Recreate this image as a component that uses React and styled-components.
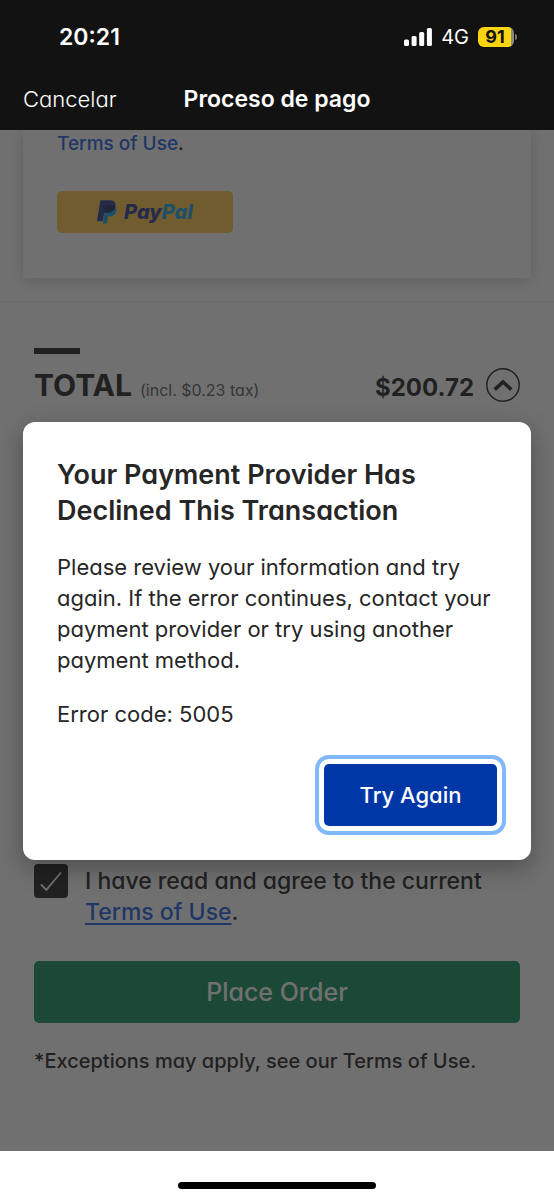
import React, { useState } from "react";
import styled, { createGlobalStyle } from "styled-components";

const GlobalStyle = createGlobalStyle`
  *, *::before, *::after { box-sizing: border-box; }
  body {
    margin: 0;
    background: #fff;
    color: #262626;
    font-family: Inter, "Liberation Sans", sans-serif;
    font-feature-settings: "cv11";
  }
  h1, h2, p { margin: 0; }
  button { font: inherit; font-feature-settings: inherit; border: 0; padding: 0; cursor: pointer; }
`;

const Screen = styled.div`
  display: flex;
  flex-direction: column;
  min-height: 100vh;
`;

const Header = styled.header`
  background: #121212;
  color: #fff;
  padding: 22px 23px 16px;
`;

const StatusBar = styled.div`
  display: flex;
  align-items: center;
  justify-content: space-between;
  height: 30px;
  padding: 0 14px 0 36px;
`;

const Clock = styled.time`
  font-size: 23px;
  font-weight: 600;
  font-feature-settings: normal;
`;

const Indicators = styled.div`
  display: flex;
  align-items: center;
  gap: 9px;
  font-size: 20px;
`;

const Battery = styled.span`
  display: flex;
  align-items: center;
  gap: 1px;
`;

const BatteryLevel = styled.span`
  width: 36px;
  height: 20px;
  border-radius: 6px;
  background: linear-gradient(to right, #fbd50f 91%, #8c8a80 91%);
  color: #121212;
  font-size: 18px;
  font-weight: 700;
  line-height: 20px;
  text-align: center;
  padding-right: 2px;
`;

const BatteryTip = styled.span`
  width: 2px;
  height: 6px;
  border-radius: 0 2px 2px 0;
  background: #77756f;
`;

const NavBar = styled.nav`
  display: grid;
  grid-template-columns: 1fr auto 1fr;
  align-items: center;
  height: 30px;
  margin-top: 32px;
`;

const CancelButton = styled.button`
  justify-self: start;
  background: none;
  color: #fff;
  font-size: 22px;
  font-weight: 300;
`;

const NavTitle = styled.h1`
  font-size: 23px;
  font-weight: 600;
  font-feature-settings: normal;
`;

const Stage = styled.div`
  flex: 1;
  display: grid;

  & > * { grid-area: 1 / 1; }
`;

const Checkout = styled.main`
  display: flex;
  flex-direction: column;
  min-width: 0;
`;

const PaymentCard = styled.section`
  margin: 0 23px 23px;
  padding: 0 34px 45px;
  background: #fff;
  box-shadow: 0 2px 14px rgba(0, 0, 0, 0.2);
  clip-path: inset(0 -20px -20px -20px);
`;

const CardTerms = styled.p`
  font-size: 19px;
  font-weight: 500;
  line-height: 28px;
`;

const Link = styled.a`
  color: #1e62e0;
  text-decoration: ${(p) => (p.$underlined ? "underline" : "none")};
  text-decoration-thickness: 2px;
  text-underline-offset: 3px;
`;

const PayPalButton = styled.button`
  display: flex;
  align-items: center;
  justify-content: center;
  gap: 7px;
  width: 176px;
  height: 42px;
  margin-top: 33px;
  border-radius: 5px;
  background: #ffc84c;
`;

const PayPalWord = styled.span`
  font-size: 20px;
  font-weight: 800;
  font-style: italic;
  color: #2b3f96;

  em { color: #1fa5e6; }
`;

const Summary = styled.section`
  padding: 46px 34px 0;
  border-top: 1px solid #efefef;
`;

const Accent = styled.div`
  width: 46px;
  height: 6px;
  background: #262626;
`;

const TotalRow = styled.div`
  display: flex;
  align-items: center;
  gap: 12px;
  height: 36px;
  margin-top: 13px;
`;

const TotalFigures = styled.div`
  flex: 1;
  display: flex;
  align-items: baseline;
  gap: 8px;
`;

const TotalLabel = styled.h2`
  font-size: 30px;
  font-weight: 700;
  line-height: 36px;
`;

const TaxNote = styled.small`
  font-size: 16px;
  color: #606060;
`;

const Amount = styled.strong`
  margin-left: auto;
  font-size: 24px;
  font-weight: 700;
`;

const ToggleButton = styled.button`
  display: grid;
  background: none;
`;

const OrderForm = styled.form`
  margin-top: auto;
  padding: 0 34px 76px;
`;

const Agreement = styled.div`
  display: flex;
  align-items: flex-start;
  gap: 17px;
`;

const AgreementLabel = styled.label`
  padding-top: 2px;
  font-size: 23px;
  font-weight: 500;
  line-height: 31px;
`;

const Checkbox = styled.input`
  appearance: none;
  flex: none;
  width: 34px;
  height: 34px;
  margin: 0;
  border: 2px solid #262626;
  border-radius: 4px;

  &:checked {
    background: #262626
      url("data:image/svg+xml,%3Csvg xmlns='http://www.w3.org/2000/svg' viewBox='0 0 30 30'%3E%3Cpath d='M5 18.500l5.300 5.300L25 6.500' fill='none' stroke='white' stroke-width='1.800'/%3E%3C/svg%3E")
      center / 30px no-repeat;
  }
`;

const PlaceOrder = styled.button`
  width: 100%;
  height: 62px;
  margin-top: 33px;
  border-radius: 5px;
  background: #14945b;
  color: #fff;
  font-size: 25px;
  font-weight: 500;
`;

const Footnote = styled.p`
  margin-top: 24px;
  font-size: 20px;
  font-weight: 500;
  line-height: 28px;
`;

const Overlay = styled.div`
  z-index: 1;
  display: flex;
  align-items: center;
  justify-content: center;
  padding: 0 23px;
  background: rgba(31, 31, 31, 0.64);
`;

const Dialog = styled.div`
  display: flex;
  flex-direction: column;
  width: 100%;
  padding: 35px 34px 34px;
  border-radius: 12px;
  background: #fff;
  box-shadow: 0 8px 24px rgba(0, 0, 0, 0.3);
`;

const DialogTitle = styled.h2`
  font-size: 27px;
  font-weight: 600;
  line-height: 36px;
`;

const DialogText = styled.p`
  margin-top: 23px;
  font-size: 22px;
  line-height: 31px;
`;

const RetryButton = styled.button`
  align-self: flex-end;
  width: 173px;
  height: 62px;
  margin-top: 34px;
  border-radius: 5px;
  background: #0037a6;
  color: #fff;
  font-size: 22px;
  font-weight: 500;
  outline: 4px solid #80b8fb;
  outline-offset: 5px;
`;

const HomeArea = styled.footer`
  display: flex;
  justify-content: center;
  padding: 31px 0 11px;
`;

const HomeIndicator = styled.div`
  width: 198px;
  height: 7px;
  border-radius: 4px;
  background: #000;
`;

function SignalIcon() {
  return (
    <svg width="28" height="18" viewBox="0 0 28 18" fill="#fff" aria-hidden="true">
      <rect x="0" y="11.500" width="5" height="6.500" rx="1.500" />
      <rect x="7.600" y="8" width="5" height="10" rx="1.500" />
      <rect x="15.200" y="4" width="5" height="14" rx="1.500" />
      <rect x="22.900" y="0" width="5" height="18" rx="1.500" />
    </svg>
  );
}

function PayPalMark() {
  return (
    <svg width="20" height="24" viewBox="0 0 20 24" aria-hidden="true">
      <path d="M18.300 6.200C20 8 19.800 10.500 18.800 12.700c-1.200 2.600-3.400 3.600-6.200 3.600h-1.400l-1.200 6.400c-.1.500-.4.800-.9.800H5.700l2-12z" fill="#1fa5e6" />
      <path d="M4.200.3h8.300c4.500 0 6.700 2.300 5.900 6-.9 4.500-3.700 6.300-8 6.300H8.200c-.6 0-1 .3-1.100.9L5.800 20.600c-.1.400-.4.600-.8.600H.7c-.5 0-.7-.3-.6-.8L3.200 1.100c.1-.5.500-.8 1-.8z" fill="#2b3f96" />
      <path d="M7.200 13.200c.2-.5.500-.6 1-.6h2.200c4.300 0 7.100-1.800 7.900-6.400-.3-.2-.5-.3-.8-.4-1-.3-2-.4-3.200-.4H9.100c-.4 0-.7.300-.8.700z" fill="#222d65" />
    </svg>
  );
}

function ChevronUpCircle() {
  return (
    <svg width="34" height="34" viewBox="0 0 34 34" fill="none" stroke="#262626" aria-hidden="true">
      <circle cx="17" cy="17" r="16.200" strokeWidth="1.500" />
      <path d="M8.700 21.600L17 14l8.300 7.600" strokeWidth="3.600" />
    </svg>
  );
}

export default function App() {
  const [agreed, setAgreed] = useState(true);
  return (
    <Screen>
      <GlobalStyle />
      <Header>
        <StatusBar>
          <Clock>20:21</Clock>
          <Indicators>
            <SignalIcon />
            <span>4G</span>
            <Battery>
              <BatteryLevel>91</BatteryLevel>
              <BatteryTip />
            </Battery>
          </Indicators>
        </StatusBar>
        <NavBar>
          <CancelButton type="button">Cancelar</CancelButton>
          <NavTitle>Proceso de pago</NavTitle>
        </NavBar>
      </Header>
      <Stage>
        <Checkout>
          <PaymentCard>
            <CardTerms>
              <Link href="#terms">Terms of Use</Link>.
            </CardTerms>
            <PayPalButton type="button">
              <PayPalMark />
              <PayPalWord>
                Pay<em>Pal</em>
              </PayPalWord>
            </PayPalButton>
          </PaymentCard>
          <Summary>
            <Accent />
            <TotalRow>
              <TotalFigures>
                <TotalLabel>TOTAL</TotalLabel>
                <TaxNote>(incl. $0.23 tax)</TaxNote>
                <Amount>$200.72</Amount>
              </TotalFigures>
              <ToggleButton type="button" aria-label="Toggle order details">
                <ChevronUpCircle />
              </ToggleButton>
            </TotalRow>
          </Summary>
          <OrderForm onSubmit={(e) => e.preventDefault()}>
            <Agreement>
              <Checkbox
                id="agree"
                type="checkbox"
                checked={agreed}
                onChange={(e) => setAgreed(e.target.checked)}
              />
              <AgreementLabel htmlFor="agree">
                I have read and agree to the current{" "}
                <Link href="#terms" $underlined>
                  Terms of Use
                </Link>
                .
              </AgreementLabel>
            </Agreement>
            <PlaceOrder type="submit">Place Order</PlaceOrder>
            <Footnote>*Exceptions may apply, see our Terms of Use.</Footnote>
          </OrderForm>
        </Checkout>
        <Overlay>
          <Dialog role="alertdialog" aria-modal="true" aria-labelledby="dialog-title">
            <DialogTitle id="dialog-title">
              Your Payment Provider Has Declined This Transaction
            </DialogTitle>
            <DialogText>
              Please review your information and try again. If the error continues, contact your
              payment provider or try using another payment method.
            </DialogText>
            <DialogText>Error code: 5005</DialogText>
            <RetryButton type="button">Try Again</RetryButton>
          </Dialog>
        </Overlay>
      </Stage>
      <HomeArea>
        <HomeIndicator />
      </HomeArea>
    </Screen>
  );
}
